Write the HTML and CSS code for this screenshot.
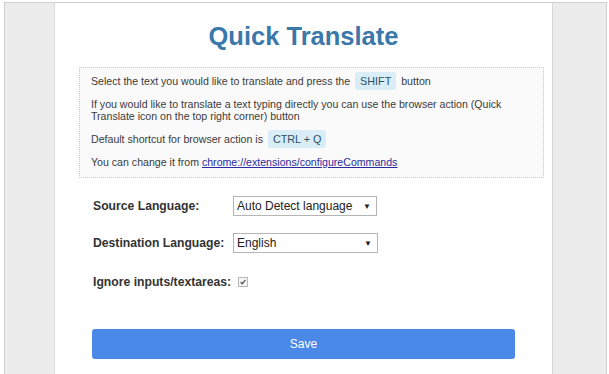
FILE: index.html
```html
<!DOCTYPE html>
<html>
<head>
<meta charset="utf-8">
<link rel="stylesheet" href="styles.css">
</head>
<body>
<div class="frame">
  <div class="gutter gutter-left"></div>
  <main class="main">
    <h1 class="title">Quick Translate</h1>
    <div class="info">
      <p>Select the text you would like to translate and press the <span class="key">SHIFT</span> button</p>
      <p>If you would like to translate a text typing directly you can use the browser action (Quick Translate icon on the top right corner) button</p>
      <p>Default shortcut for browser action is <span class="key">CTRL + Q</span></p>
      <p>You can change it from <a class="link" href="#">chrome://extensions/configureCommands</a></p>
    </div>
    <div class="form">
      <div class="row">
        <span class="label">Source Language:</span>
        <div class="select"><span>Auto Detect language</span><span class="arrow">&#9660;</span></div>
      </div>
      <div class="row">
        <span class="label">Destination Language:</span>
        <div class="select wide"><span>English</span><span class="arrow">&#9660;</span></div>
      </div>
      <div class="row">
        <span class="label">Ignore inputs/textareas:</span>
        <span class="check"><svg width="10" height="10" viewBox="0 0 10 10"><path d="M2 5.2 L4 7.2 L8 2.6" fill="none" stroke="#555" stroke-width="1.6"/></svg></span>
      </div>
    </div>
    <button class="save">Save</button>
  </main>
  <div class="gutter gutter-right"></div>
</div>
</body>
</html>
```
FILE: styles.css
```css
* { box-sizing: border-box; }
html, body { margin: 0; height: 100%; }
body {
  background: #fff;
  padding: 2px 2px 0 4px;
  font-family: "Liberation Sans", Arial, sans-serif;
  color: #333;
}
.frame {
  display: flex;
  height: 100%;
  border-top: 1px solid #cfcfcf;
  border-left: 1px solid #cfcfcf;
  border-right: 1px solid #cfcfcf;
}
.gutter { background: #ececec; }
.gutter-left { width: 50px; border-right: 1px solid #dcdcdc; }
.gutter-right { width: 54px; border-left: 1px solid #d6d6d6; }
.main {
  flex: 1;
  background: #fff;
  padding-top: 18px;
}
.title {
  margin: 0 0 16px;
  text-align: center;
  font-size: 25.5px;
  line-height: 30px;
  font-weight: bold;
  color: #3b78aa;
}
.info {
  margin-left: 24px;
  width: 465px;
  border: 1px dotted #c8c8c8;
  background: #fafafa;
  padding: 7px 11px 9px;
  font-size: 10.6px;
  line-height: 12px;
  color: #3a3a3a;
}
.info p { margin: 0 0 11px; }
.info p:last-child { margin-bottom: 0; }
.key {
  display: inline-block;
  background: #d9edf6;
  color: #2f4f66;
  border-radius: 3px;
  padding: 3px 5px;
  margin: -3px 2px;
  font-size: 10.8px;
}
.link { color: #2b2ba0; text-decoration: underline; }
.form {
  margin: 18px 0 0 38px;
  display: flex;
  flex-direction: column;
  gap: 17px;
}
.row {
  display: flex;
  align-items: center;
  height: 20px;
}
.row:last-child { margin-top: 2px; }
.label {
  width: 140px;
  font-size: 12.2px;
  font-weight: bold;
  color: #333;
}
.select {
  width: 144px;
  height: 20px;
  border: 1px solid #b5b5b5;
  background: #fff;
  display: flex;
  align-items: center;
  justify-content: space-between;
  padding: 0 5px 0 3px;
  font-size: 12px;
  color: #222;
}
.select.wide { width: 145px; }
.arrow { font-size: 8px; color: #222; }
.check {
  margin-left: 5px;
  width: 10px;
  height: 10px;
  border: 1px solid #b8b8b8;
  background: #f4f4f4;
  display: flex;
  align-items: center;
  justify-content: center;
}
.check svg { display: block; }
.save {
  display: block;
  margin: 37px 0 0 37px;
  width: 423px;
  height: 30px;
  border: none;
  border-radius: 3px;
  background: #4a89e8;
  color: #fff;
  font-family: "Liberation Sans", Arial, sans-serif;
  font-size: 12px;
}
```
